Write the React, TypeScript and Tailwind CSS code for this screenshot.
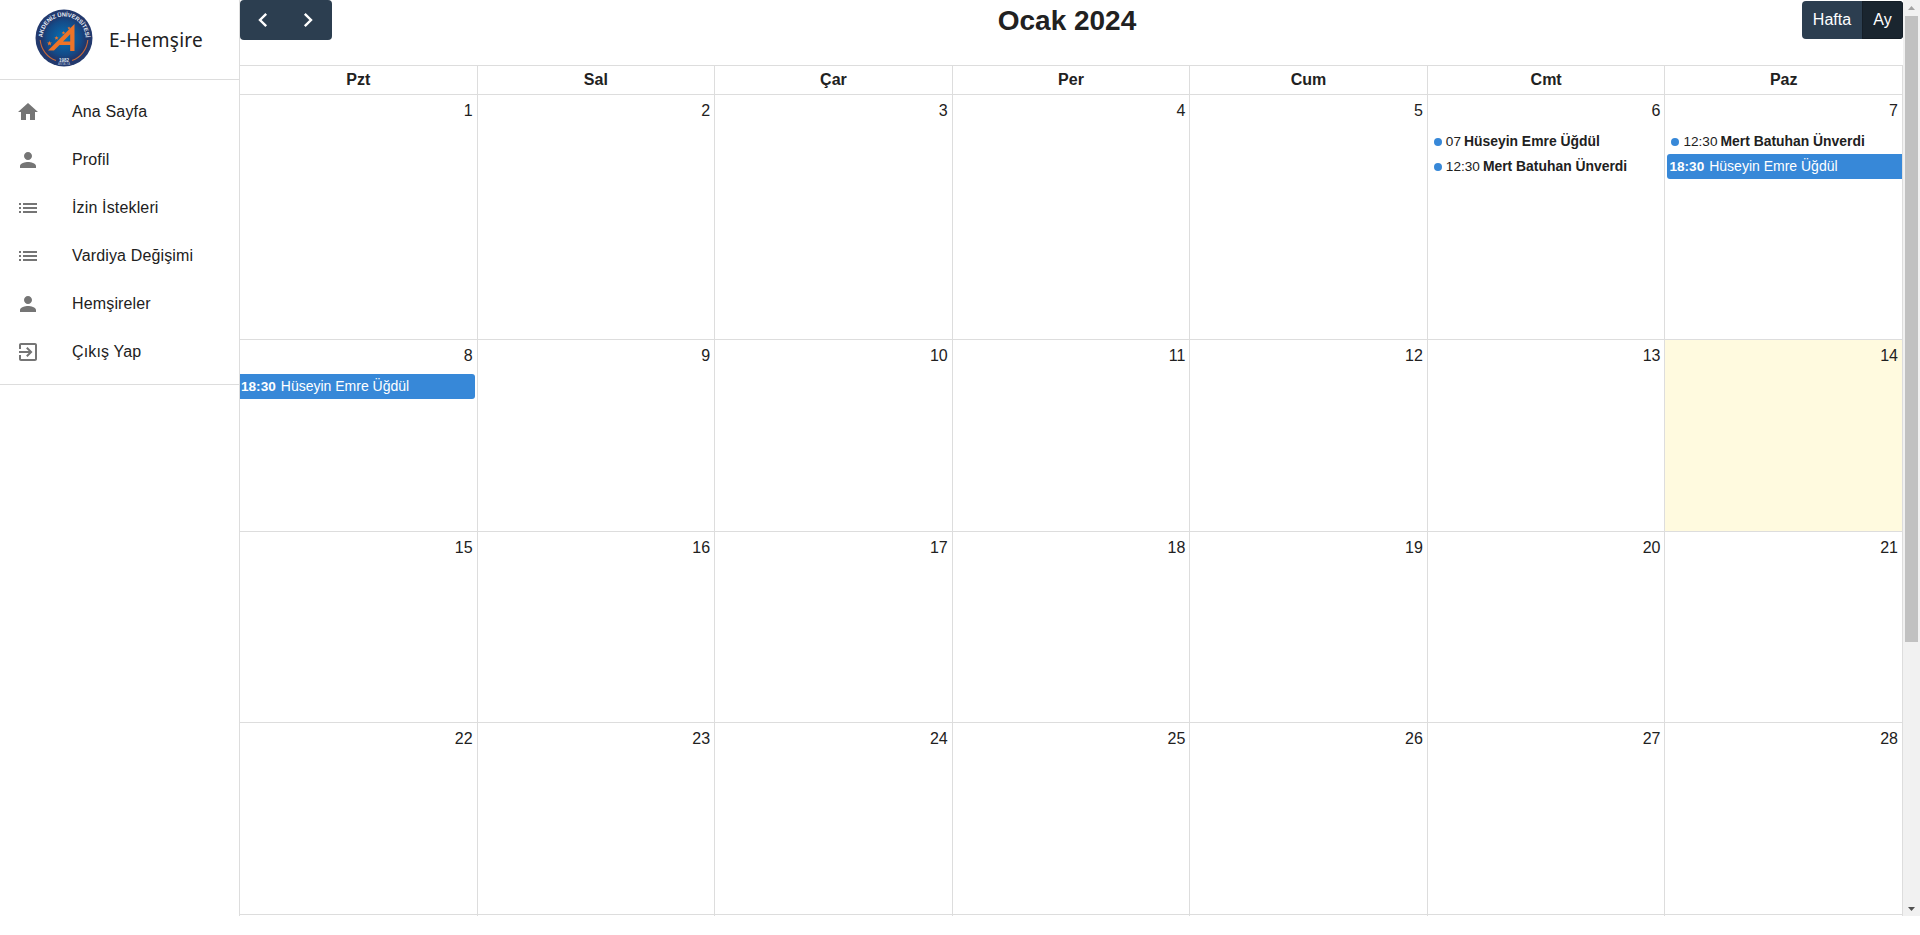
import type { ReactNode } from 'react';

const personIcon = 'M12 12c2.21 0 4-1.79 4-4s-1.79-4-4-4-4 1.79-4 4 1.79 4 4 4zm0 2c-2.67 0-8 1.34-8 4v2h16v-2c0-2.66-5.33-4-8-4z';
const listIcon = 'M3 13h2v-2H3v2zm0 4h2v-2H3v2zm0-8h2V7H3v2zm4 4h14v-2H7v2zm0 4h14v-2H7v2zM7 7v2h14V7H7z';

const menu: { label: string; icon: string }[] = [
  { label: 'Ana Sayfa', icon: 'M10 20v-6h4v6h5v-8h3L12 3 2 12h3v8z' },
  { label: 'Profil', icon: personIcon },
  { label: 'İzin İstekleri', icon: listIcon },
  { label: 'Vardiya Değişimi', icon: listIcon },
  { label: 'Hemşireler', icon: personIcon },
  { label: 'Çıkış Yap', icon: 'M10.09 15.59 11.5 17l5-5-5-5-1.41 1.41L12.67 11H3v2h9.67l-2.58 2.59zM19 3H5c-1.11 0-2 .9-2 2v4h2V5h14v14H5v-4H3v4c0 1.1.89 2 2 2h14c1.1 0 2-.9 2-2V5c0-1.1-.9-2-2-2z' },
];

const days = ['Pzt', 'Sal', 'Çar', 'Per', 'Cum', 'Cmt', 'Paz'];

const weeks = [
  { start: 1, height: 'h-[245px]' },
  { start: 8, height: 'h-[192px]' },
  { start: 15, height: 'h-[191px]' },
  { start: 22, height: 'h-[192px]' },
];

const star = 'M0-2.400.7-.8 2.400-.7 1.100.5 1.500 2.200 0 1.300-1.500 2.200-1.100.5-2.400-.7-.7-.8z';

function Logo() {
  return (
    <svg className="mb-[3px] size-[58px]" viewBox="0 0 58 58">
      <defs>
        <radialGradient id="logo-fill">
          <stop offset="0" stopColor="#0671b4" />
          <stop offset="0.6" stopColor="#144a87" />
          <stop offset="0.78" stopColor="#20376c" />
          <stop offset="1" stopColor="#233a6e" />
        </radialGradient>
        <path id="logo-arc" d="M7.500 29a21.500 21.500 0 0 1 43 0" />
      </defs>
      <circle cx="29" cy="29" r="28.5" fill="url(#logo-fill)" />
      <path d="M5.200 31a23.800 23.800 0 0 0 15.800 20.500M52.800 31a23.800 23.800 0 0 1-15.800 20.500" fill="none" stroke="#c4683a" strokeWidth="1.100" />
      <text fill="#e6ecf5" fontSize="5.800" fontWeight="700" fontFamily="Liberation Sans">
        <textPath href="#logo-arc" startOffset="50%" textAnchor="middle" textLength="66">AKDENİZ ÜNİVERSİTESİ</textPath>
      </text>
      <path d="M13 41.500 35 19.500 39.500 15V42H35.200V36H24.500L19 41.500ZM28 32.500H35.200V25.300Z" fill="#ee7428" fillRule="evenodd" />
      <g fill="#ee7428">
        <path d={star} transform="translate(14.500 34.300)" />
        <path d={star} transform="translate(21.500 29) scale(.85)" />
        <path d={star} transform="translate(28.500 23.800) scale(.75)" />
        <path d={star} transform="translate(34 19) scale(.65)" />
      </g>
      <text x="29" y="53.300" textAnchor="middle" fill="#dde5f0" fontSize="4.500" fontWeight="700" fontFamily="Liberation Sans">1982</text>
      <text x="29" y="56.300" textAnchor="middle" fill="#a9b6cf" fontSize="2.800" fontFamily="Liberation Sans">ANTALYA</text>
    </svg>
  );
}

function Sidebar() {
  return (
    <aside className="w-60 shrink-0 border-r border-[#ddd]">
      <div className="flex h-20 items-center border-b border-[#ddd] pl-[35px]">
        <Logo />
        <span className="mt-0.5 ml-4 font-['Noto_Sans',sans-serif] text-[19px] tracking-[0.3px]">E-Hemşire</span>
      </div>
      <nav className="border-b border-[#ddd] py-2">
        {menu.map((item) => (
          <div key={item.label} className="flex h-12 items-center pl-4">
            <svg viewBox="0 0 24 24" className="size-6 fill-[#757575]">
              <path d={item.icon} />
            </svg>
            <span className="ml-8 leading-6 tracking-[0.15px]">{item.label}</span>
          </div>
        ))}
      </nav>
    </aside>
  );
}

function DotEvent({ time, name }: { time: string; name: string }) {
  return (
    <div className="mb-px flex h-6 items-center pt-px pl-1.5 text-[13.6px] leading-[17px]">
      <span className="mr-[4px] size-2 rounded-full bg-[#3788d8]" />
      <span className="mr-[3px]">{time}</span>
      <b className="text-[13.9px]">{name}</b>
    </div>
  );
}

function BarEvent({ time, name, shape }: { time: string; name: string; shape: string }) {
  return (
    <div className={`flex h-[25px] items-center bg-[#3788d8] text-[13.6px] leading-[17px] text-white ${shape}`}>
      <b className="mr-[5px]">{time}</b>
      <span className="text-[14px]">{name}</span>
    </div>
  );
}

const events: Record<number, ReactNode> = {
  6: (
    <>
      <DotEvent time="07" name="Hüseyin Emre Üğdül" />
      <DotEvent time="12:30" name="Mert Batuhan Ünverdi" />
    </>
  ),
  7: (
    <>
      <DotEvent time="12:30" name="Mert Batuhan Ünverdi" />
      <BarEvent time="18:30" name="Hüseyin Emre Üğdül" shape="ml-[2px] rounded-l-[3px] pl-[2px]" />
    </>
  ),
  8: <BarEvent time="18:30" name="Hüseyin Emre Üğdül" shape="mr-[2px] rounded-r-[3px] pl-px" />,
};

function Calendar() {
  return (
    <main className="flex min-w-0 flex-1 flex-col overflow-hidden">
      <div className="flex h-[65px] items-start justify-between">
        <div className="flex h-10 w-[92px] items-center gap-[35px] rounded bg-[#2c3e50] pl-[18px]">
          <svg viewBox="0 0 10 16" className="h-4 w-2.5 fill-none stroke-white stroke-[2.4]">
            <path d="M8.200 1.800 2 8l6.200 6.200" />
          </svg>
          <svg viewBox="0 0 10 16" className="h-4 w-2.5 fill-none stroke-white stroke-[2.4]">
            <path d="M1.800 1.800 8 8l-6.200 6.200" />
          </svg>
        </div>
        <h2 className="text-[28px] leading-[41px] font-bold">Ocak 2024</h2>
        <div className="mt-px flex h-[38px] overflow-hidden rounded bg-[#2c3e50] text-white">
          <span className="w-[60px] text-center leading-[38px]">Hafta</span>
          <span className="w-[41px] border border-[#151e27] bg-[#1a252f] text-center leading-9">Ay</span>
        </div>
      </div>
      <div className="grid h-[30px] shrink-0 grid-cols-7 border-y border-[#ddd]">
        {days.map((d) => (
          <div key={d} className="border-r border-[#ddd] text-center leading-7 font-bold">{d}</div>
        ))}
      </div>
      {weeks.map((w) => (
        <div key={w.start} className={`grid shrink-0 grid-cols-7 border-b border-[#ddd] ${w.height}`}>
          {days.map((_, i) => {
            const n = w.start + i;
            return (
              <div key={n} className={`min-w-0 border-r border-[#ddd] ${n === 14 ? 'bg-[#fffadf]' : ''}`}>
                <div className="h-[34px] pt-1 pr-1 text-right leading-6">{n}</div>
                {events[n]}
              </div>
            );
          })}
        </div>
      ))}
      <div className="grid flex-1 grid-cols-7">
        {days.map((d) => (
          <div key={d} className="border-r border-[#ddd]" />
        ))}
      </div>
    </main>
  );
}

function Scrollbar() {
  return (
    <div className="flex w-[17px] flex-col items-center bg-[#f1f1f1]">
      <svg viewBox="0 0 17 16" className="h-4 w-[17px] fill-[#a3a3a3]">
        <path d="M5 10h7L8.500 6z" />
      </svg>
      <div className="h-[626px] w-[13px] bg-[#c1c1c1]" />
      <svg viewBox="0 0 17 17" className="mt-auto h-[17px] w-[17px] fill-[#505050]">
        <path d="M5 8h7l-3.500 4z" />
      </svg>
    </div>
  );
}

export default function App() {
  return (
    <div className="h-[935px] w-[1920px] overflow-hidden bg-white font-['Liberation_Sans',Arial,sans-serif] text-base text-[#212121]">
      <div className="flex h-[916px]">
        <Sidebar />
        <Calendar />
        <Scrollbar />
      </div>
    </div>
  );
}
